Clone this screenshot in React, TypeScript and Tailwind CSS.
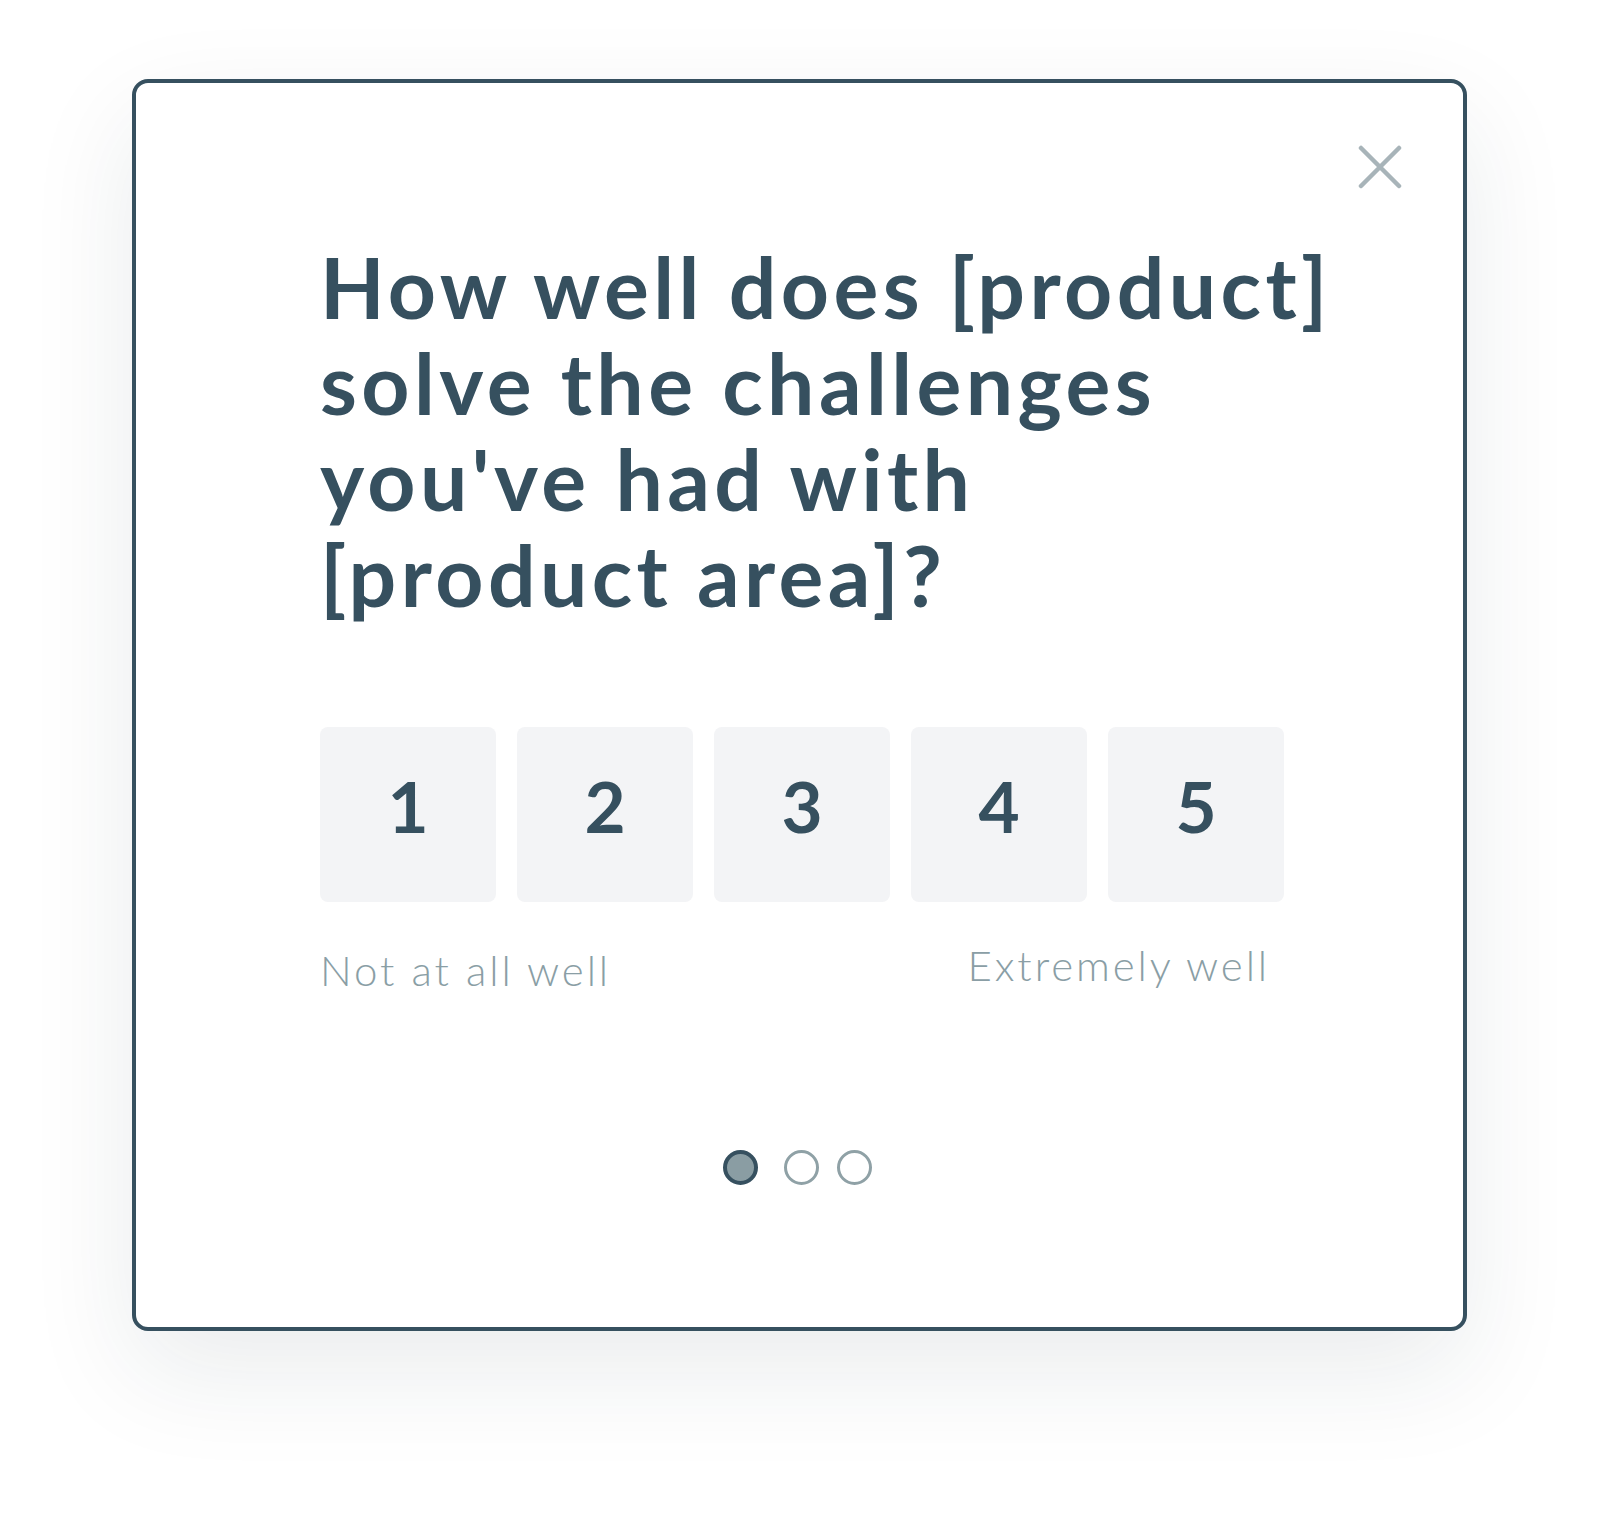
import React from "react";

// Single-question rating card: question, 1–5 scale, anchors, step dots.
const INK = "text-[#36505f]";

function CloseIcon() {
  return (
    <svg viewBox="0 0 44 44" className="h-[44px] w-[44px]" aria-hidden>
      <path
        d="M3 3 L41 41 M41 3 L3 41"
        stroke="#a8b4b9"
        strokeWidth="4.5"
        strokeLinecap="round"
        fill="none"
      />
    </svg>
  );
}

function ScaleButton({ value }: { value: number }) {
  return (
    <button
      type="button"
      className={`flex h-[175px] w-[176px] items-start justify-center rounded-[8px] bg-[#f3f4f6] pt-[41px] text-[71px] font-bold leading-[75px] ${INK}`}
    >
      {value}
    </button>
  );
}

export default function App() {
  const steps = [0, 1, 2];
  const current = 0;

  return (
    <div
      className="h-[1516px] w-[1600px] bg-white pl-[132px] pt-[79px]"
      style={{ fontFamily: "Lato, 'Noto Sans', sans-serif" }}
    >
      <div className="relative h-[1252px] w-[1335px] rounded-[16px] border-4 border-[#36505f] bg-white shadow-[0_40px_110px_rgba(20,40,60,0.09)]">
        <button
          type="button"
          aria-label="Close"
          className="absolute right-[61px] top-[62px]"
        >
          <CloseIcon />
        </button>

        <div className="pl-[184px] pt-[156px]">
          <h1
            className={`text-[84px] font-bold leading-[96px] tracking-[4.4px] ${INK}`}
          >
            How well does [product]
            <br />
            solve the challenges
            <br />
            you've had with
            <br />
            [product area]?
          </h1>

          <div className="mt-[104px] flex gap-[21px]">
            {[1, 2, 3, 4, 5].map((n) => (
              <ScaleButton key={n} value={n} />
            ))}
          </div>

          <div className="mt-[42px] flex w-[964px] items-start justify-between pr-[14px] text-[42px] font-light leading-[42px] tracking-[2.9px] text-[#8a9ea5]">
            <span className="mt-[5px]">Not at all well</span>
            <span>Extremely well</span>
          </div>
        </div>

        <div className="mt-[159px] flex justify-center pr-[4px]">
          {steps.map((i) => (
            <span
              key={i}
              className={
                i === current
                  ? "mr-[26px] h-[35px] w-[35px] rounded-full border-4 border-[#36505f] bg-[#8a9da3]"
                  : i === 1
                    ? "mr-[18px] h-[35px] w-[35px] rounded-full border-[3.5px] border-[#8fa1a6] bg-white"
                    : "h-[35px] w-[35px] rounded-full border-[3.5px] border-[#8fa1a6] bg-white"
              }
            />
          ))}
        </div>
      </div>
    </div>
  );
}
